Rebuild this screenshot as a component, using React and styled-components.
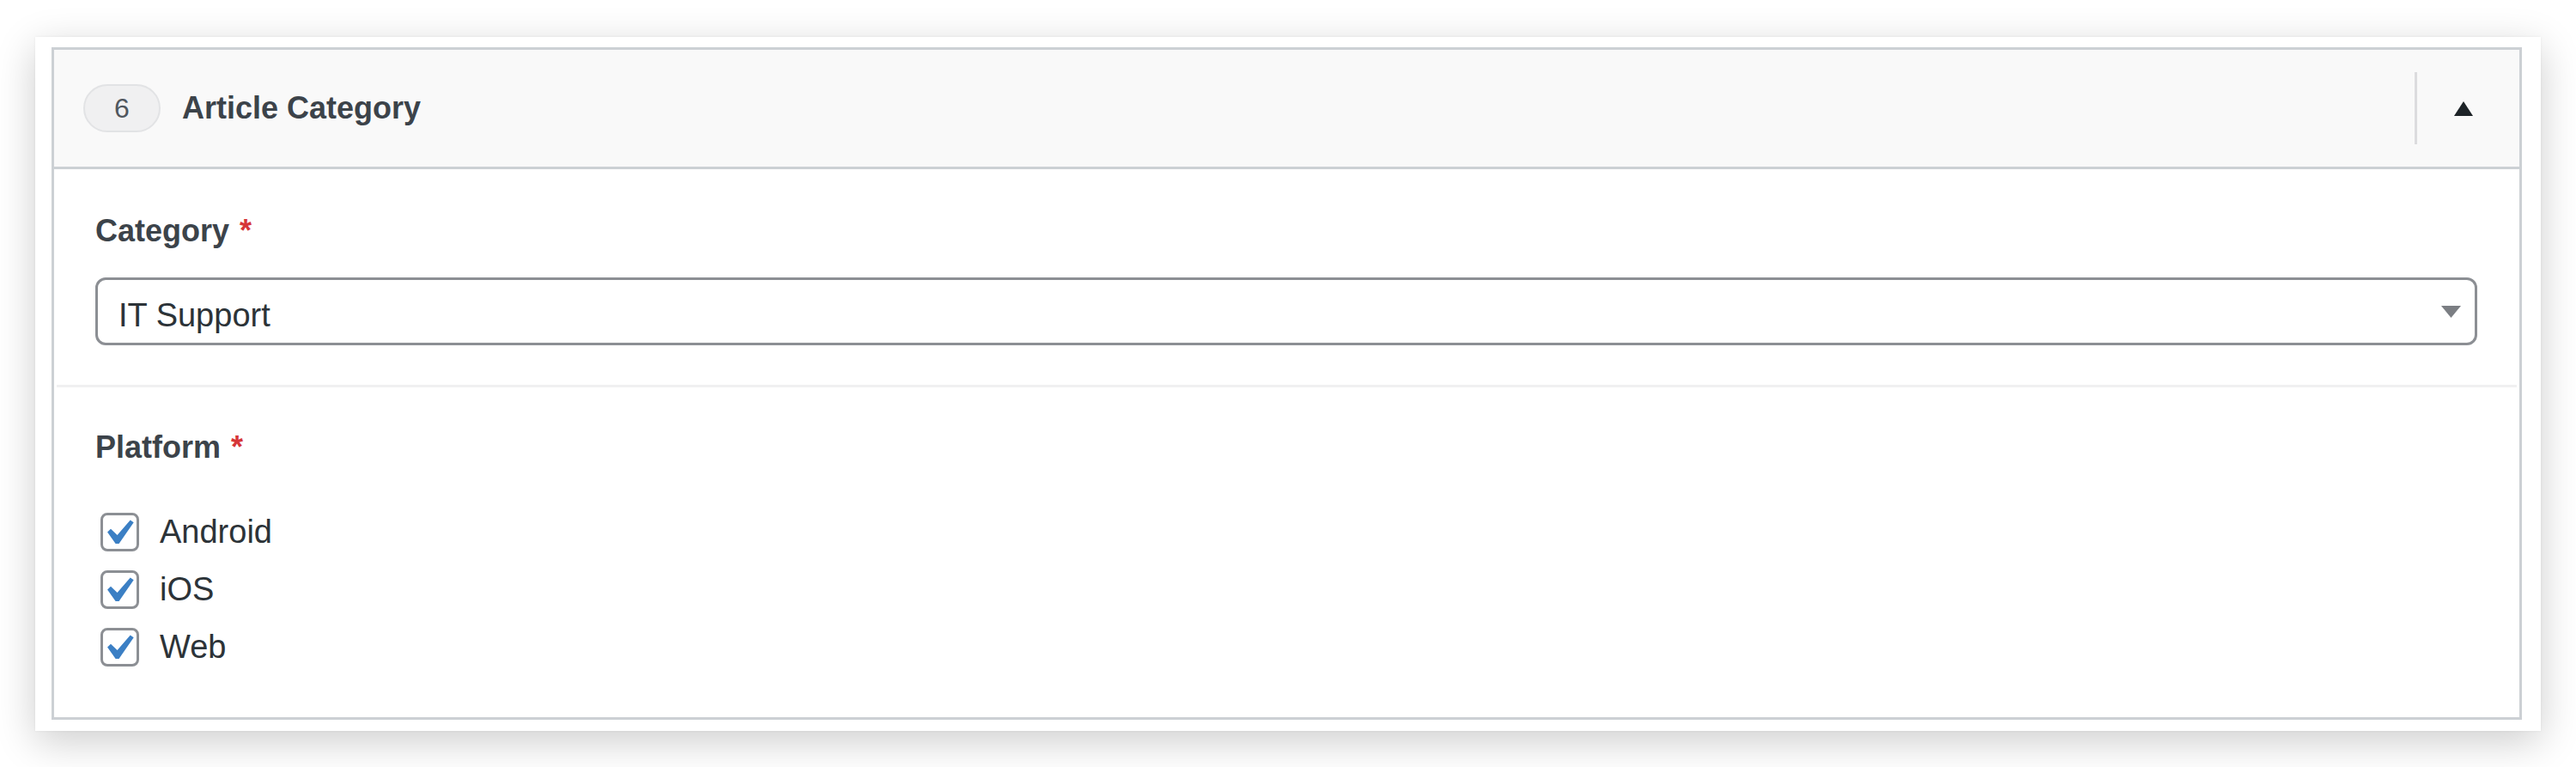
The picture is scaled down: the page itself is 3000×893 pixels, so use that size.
import React from 'react';
import styled, { createGlobalStyle } from 'styled-components';

const GlobalStyle = createGlobalStyle`
  html, body {
    margin: 0;
    padding: 0;
    background: #fff;
  }
  body {
    font-family: 'Liberation Sans', Arial, sans-serif;
  }
`;

const platforms = ['Android', 'iOS', 'Web'];

const Page = styled.div`
  padding: 43px 41px 42px;
`;

const Card = styled.div`
  background: #fff;
  padding: 12px 22px 13px 19px;
  box-shadow: 0 12px 44px rgba(0, 0, 0, 0.2), 0 0 3px rgba(0, 0, 0, 0.06);
`;

const Panel = styled.section`
  border: 3px solid #ccd0d4;
  background: #fff;
`;

const Header = styled.header`
  display: flex;
  align-items: center;
  height: 136px;
  padding: 0 11px 0 34px;
  background: #f9f9f9;
  border-bottom: 3px solid #ccd0d4;
`;

const Badge = styled.span`
  display: inline-flex;
  align-items: center;
  justify-content: center;
  box-sizing: border-box;
  width: 90px;
  height: 56px;
  border-radius: 28px;
  background: #f0f0f1;
  border: 2px solid #e2e3e5;
  color: #50575e;
  font-size: 32px;
`;

const Title = styled.h2`
  flex: 1;
  margin: 0 0 0 25px;
  font-size: 36px;
  font-weight: 700;
  color: #3c434a;
`;

const Toggle = styled.button`
  display: flex;
  align-items: center;
  justify-content: center;
  width: 111px;
  height: 84px;
  padding: 0;
  border: 0;
  border-left: 3px solid #dcdcde;
  background: transparent;
  cursor: pointer;
`;

const Field = styled.div`
  padding: ${(p) => p.$top}px 49px ${(p) => p.$bottom}px 48px;
`;

const Divider = styled.hr`
  margin: 0 3px;
  height: 3px;
  border: 0;
  background: #f0f0f1;
`;

const Label = styled.div`
  margin-bottom: ${(p) => p.$gap}px;
  font-size: 36px;
  font-weight: 700;
  line-height: 50px;
  color: #3c434a;
`;

const Required = styled.span`
  margin-left: 12px;
  color: #d63638;
`;

const SelectBox = styled.div`
  display: flex;
  align-items: center;
  justify-content: space-between;
  box-sizing: border-box;
  height: 79px;
  padding: 0 16px 0 24px;
  border: 3px solid #8c8f94;
  border-radius: 12px;
  background: #fff;
  font-size: 38px;
  color: #2c3338;
`;

const SelectValue = styled.span`
  padding-top: 10px;
`;

const Options = styled.div`
  display: flex;
  flex-direction: column;
`;

const Option = styled.label`
  display: flex;
  align-items: center;
  gap: 24px;
  height: 67px;
  padding-left: 6px;
  font-size: 38px;
  color: #2c3338;
`;

const Box = styled.span`
  position: relative;
  flex: none;
  box-sizing: border-box;
  width: 45px;
  height: 45px;
  border: 3px solid #8c8f94;
  border-radius: 8px;
  background: #fff;

  svg {
    position: absolute;
    left: -12px;
    top: -9px;
    width: 59px;
    height: 59px;
  }
`;

const Check = () => (
  <svg viewBox="0 0 20 20">
    <path
      d="M14.83 4.89l1.34.94-5.81 8.38H9.02L5.78 9.67l1.34-1.25 2.57 2.4z"
      fill="#3b7fc4"
    />
  </svg>
);

export default function App() {
  return (
    <>
      <GlobalStyle />
      <Page>
        <Card>
          <Panel>
            <Header>
              <Badge>6</Badge>
              <Title>Article Category</Title>
              <Toggle aria-label="Toggle panel">
                <svg width="22" height="17" viewBox="0 0 22 17">
                  <polygon points="0,17 11,0 22,17" fill="#1d2327" />
                </svg>
              </Toggle>
            </Header>

            <Field $top={47} $bottom={46}>
              <Label $gap={29}>
                Category<Required>*</Required>
              </Label>
              <SelectBox>
                <SelectValue>IT Support</SelectValue>
                <svg width="23" height="14" viewBox="0 0 23 14">
                  <polygon points="0,0 23,0 11.5,14" fill="#7b7e83" />
                </svg>
              </SelectBox>
            </Field>

            <Divider />

            <Field $top={45} $bottom={48}>
              <Label $gap={40}>
                Platform<Required>*</Required>
              </Label>
              <Options>
                {platforms.map((p) => (
                  <Option key={p}>
                    <Box>
                      <Check />
                    </Box>
                    {p}
                  </Option>
                ))}
              </Options>
            </Field>
          </Panel>
        </Card>
      </Page>
    </>
  );
}
